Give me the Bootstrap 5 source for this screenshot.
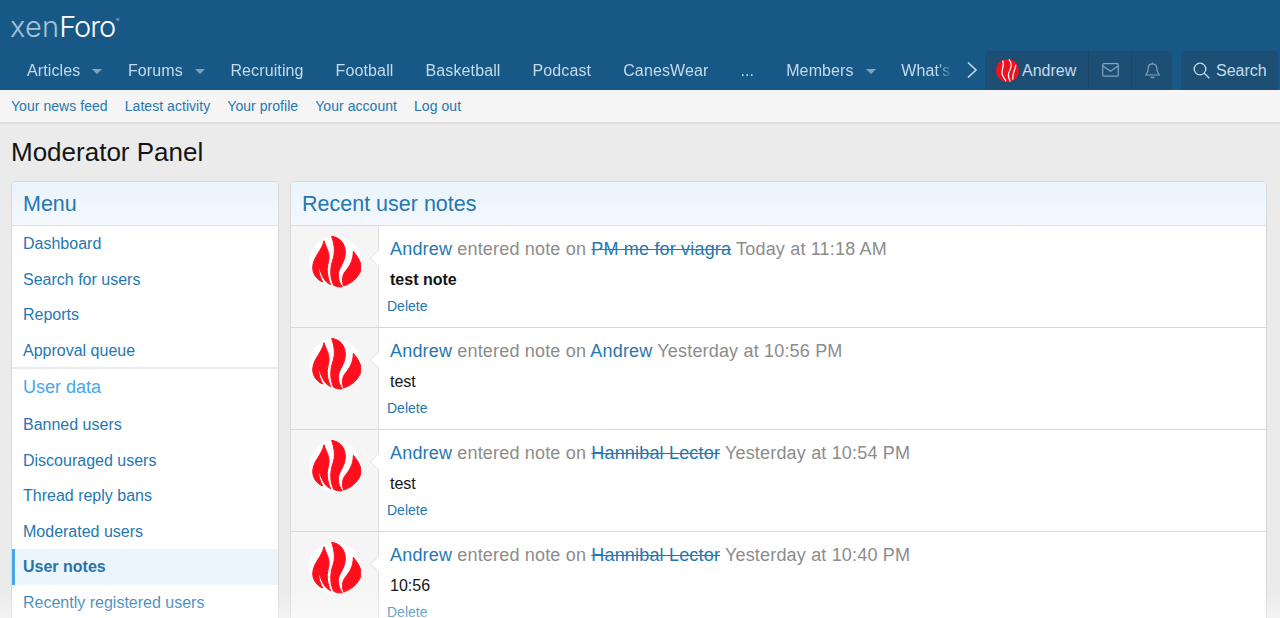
<!DOCTYPE html>
<html lang="en">
<head>
<meta charset="utf-8">
<title>Moderator Panel</title>
<link href="https://cdn.jsdelivr.net/npm/bootstrap@5.3.0/dist/css/bootstrap.min.css" rel="stylesheet">
<style>
html,body{height:618px;overflow:hidden}
body{background:#ebebeb;font-family:"Liberation Sans",Arial,sans-serif;font-size:16px;color:#141414;position:relative}
a{color:#2577b1;text-decoration:none}
.xf-head{background:#185886;height:90px}
.xf-logo{height:50px;padding:0 10px;font-family:"Inter","Liberation Sans",sans-serif;font-size:29px;font-weight:300;letter-spacing:-1.1px;line-height:53px;color:#fff}
.xf-logo span{color:#a5c3d9;letter-spacing:.2px}
.xf-logo sup{font-size:5px;top:-15px;color:#c5d8e6;margin-left:1px}
.xf-navbar{height:40px;padding-left:11px}
.xf-scroll{width:944px;overflow:hidden;white-space:nowrap;-webkit-mask-image:linear-gradient(to right,#000 925px,transparent 942px);mask-image:linear-gradient(to right,#000 925px,transparent 942px)}
.xf-tab{color:#c5dbec;height:40px;line-height:42px;padding:0 16px;flex:none;letter-spacing:.12px}
.xf-caret{display:inline-block;width:0;height:0;border-left:5px solid transparent;border-right:5px solid transparent;border-top:5px solid #7fa5c2;margin-left:12px;vertical-align:2px}
.xf-tab.has-caret{padding-right:9.5px}
.xf-chev{width:30px;flex:none;padding-left:4px}
.xf-group{background:#1d4f75;border-radius:4px 4px 0 0;height:39.5px;margin-top:.5px;color:#c5dbec}
.xf-user{width:103px;padding:1px 0 0 11px;gap:3px}
.xf-ico{width:43px;border-left:1px solid #1a486b}
.xf-ico2{width:41px;border-left:1px solid #1a486b}
.xf-search{margin-left:9px;width:97px;padding:1px 0 0 12px;gap:6px}
.xf-sub{height:34px;background:#f5f5f5;border-bottom:2px solid #dfdfdf;font-size:14px;padding:0 11px;gap:17px;line-height:33px;letter-spacing:.05px}
.xf-title{font-size:26px;font-weight:400;margin:0;padding:13px 11px 0;height:57px;line-height:30px;color:#141414}
.xf-wrap{padding:0 13px 0 11px;gap:11px}
.xf-side{width:268px;flex:none}
.xf-block{background:#fff;border:1px solid #d8d8d8;border-radius:4px 4px 0 0;overflow:hidden}
.xf-hd{font-size:21.5px;height:44px;line-height:44px;padding:0 11px;color:#2577b1;background:linear-gradient(#eaf4fc,#f3f8fd);border-bottom:1px solid #dfdfdf}
.xf-link{display:block;height:35.5px;line-height:35px;padding:0 11px;color:#2577b1}
.xf-link.is-on{background:#ebf5fd;font-weight:700;border-left:3px solid #47a7eb;padding-left:8px;color:#2a72a8}
.xf-cat{font-size:18px;color:#47a7eb;border-top:2px solid #ebebeb;height:40px;margin-top:-1px;line-height:36px;padding:0 11px}
.xf-note{height:102px;border-bottom:1px solid #d8d8d8}
.xf-cell{width:88px;flex:none;background:#f5f5f5;border-right:1px solid #dfdfdf;padding:10px 0 0 18px;position:relative}
.xf-cell::before,.xf-cell::after{content:"";position:absolute;top:24px;width:0;height:0;border-top:8px solid transparent;border-bottom:8px solid transparent}
.xf-cell::before{right:0;border-right:8px solid #dfdfdf}
.xf-cell::after{right:-1px;border-right:8px solid #fff}
.xf-body{padding:11px 0 0 8px}
.xf-line{font-size:18px;line-height:25px;color:#8c8c8c;padding-left:3px;letter-spacing:.18px}
.xf-text{line-height:24px;margin-top:6px;padding-left:3px;height:24px}
.xf-del{font-size:14px;line-height:16px;margin-top:6px}
.xf-shade{position:absolute;left:0;right:0;bottom:0;height:30px;background:linear-gradient(rgba(255,255,255,0),rgba(255,255,255,.4));pointer-events:none}
</style>
</head>
<body>
<svg width="0" height="0" class="position-absolute">
<defs>
<symbol id="flame" viewBox="27 34 156 156">
<circle cx="105" cy="112" r="78" fill="#fff"/>
<g fill="#ff0f1e" stroke="#ff0f1e" stroke-width="3" stroke-linejoin="round">
<path d="M95 35C120 38 137 58 136 85C135 115 115 130 115 150C115 165 120 178 127 186C117 188 108 186 101 182C93 165 90 145 94 122C98 100 112 85 95 35Z"/>
<path d="M72 48C78 68 88 80 87 100C86 115 80 125 82 145C84 160 88 172 92 180C82 176 74 168 68 155C63 145 58 132 55 122C55 140 60 158 68 172C50 165 38 148 38 128C40 95 65 80 72 48Z"/>
<path d="M160 80C172 95 183 110 183 128C183 150 160 175 131 184C125 170 126 152 136 140C148 125 160 108 160 80Z"/>
</g>
</symbol>
</defs>
</svg>

<header class="xf-head">
  <div class="xf-logo"><span>xen</span>Foro<sup>®</sup></div>
  <div class="xf-navbar d-flex">
    <nav class="xf-scroll d-flex">
      <a class="xf-tab has-caret" href="#">Articles<i class="xf-caret"></i></a>
      <a class="xf-tab has-caret" href="#">Forums<i class="xf-caret"></i></a>
      <a class="xf-tab" href="#">Recruiting</a>
      <a class="xf-tab" href="#">Football</a>
      <a class="xf-tab" href="#">Basketball</a>
      <a class="xf-tab" href="#">Podcast</a>
      <a class="xf-tab" href="#">CanesWear</a>
      <a class="xf-tab" href="#">...</a>
      <a class="xf-tab has-caret" href="#">Members<i class="xf-caret"></i></a>
      <a class="xf-tab" href="#">What's</a>
    </nav>
    <div class="xf-chev d-flex align-items-center justify-content-center">
      <svg width="12" height="18" viewBox="0 0 12 18" fill="none" stroke="#c5dbec" stroke-width="1.6"><path d="M2 1.500 10 9 2 16.500"/></svg>
    </div>
    <div class="xf-group d-flex align-items-stretch">
      <a class="xf-user d-flex align-items-center" href="#" style="color:#c5dbec">
        <svg width="23" height="23" viewBox="0 0 24 24"><circle cx="12" cy="12" r="12" fill="#f0101e"/><path d="M7 1.500C9.500 7 5 11 6.500 16C7.500 19 9 21 10.500 23M13.500 .5C18 6 15 10 13.500 14C12.500 17 13 20 15 23.500M20.500 6C21 11 16.500 14 17.500 21.500" fill="none" stroke="#fff" stroke-width="1.300"/></svg>
        <span>Andrew</span>
      </a>
      <a class="xf-ico d-flex align-items-center justify-content-center" href="#">
        <svg width="17" height="14" viewBox="0 0 17 14" fill="none" stroke="#7fa5c2" stroke-width="1.2"><rect x=".7" y=".7" width="15.6" height="12.4" rx="1.2"/><path d="M1 3 8.500 8.200 16 3"/></svg>
      </a>
      <a class="xf-ico2 d-flex align-items-center justify-content-center" href="#">
        <svg width="15" height="17" viewBox="0 0 15 17" fill="none" stroke="#7fa5c2" stroke-width="1.2"><path d="M7.500 1.800C4.500 1.800 3.200 4 3.200 6.500C3.200 10 2 11.500 .8 13H14.200C13 11.500 11.800 10 11.800 6.500C11.800 4 10.500 1.800 7.500 1.800ZM7.500 .5V1.800M5.800 14.800C6.200 16 8.800 16 9.200 14.800"/></svg>
      </a>
    </div>
    <a class="xf-group xf-search d-flex align-items-center" href="#" style="color:#c5dbec">
      <svg width="17" height="17" viewBox="0 0 17 17" fill="none" stroke="#c5dbec" stroke-width="1.3"><circle cx="7" cy="7" r="5.800"/><path d="M11.300 11.300 16.300 16.300"/></svg>
      <span>Search</span>
    </a>
  </div>
</header>

<div class="xf-sub d-flex">
  <a href="#">Your news feed</a><a href="#">Latest activity</a><a href="#">Your profile</a><a href="#">Your account</a><a href="#">Log out</a>
</div>

<h1 class="xf-title">Moderator Panel</h1>

<div class="xf-wrap d-flex align-items-start">
  <aside class="xf-side xf-block">
    <div class="xf-hd">Menu</div>
    <a class="xf-link" href="#">Dashboard</a>
    <a class="xf-link" href="#">Search for users</a>
    <a class="xf-link" href="#">Reports</a>
    <a class="xf-link" href="#">Approval queue</a>
    <div class="xf-cat">User data</div>
    <a class="xf-link" href="#">Banned users</a>
    <a class="xf-link" href="#">Discouraged users</a>
    <a class="xf-link" href="#">Thread reply bans</a>
    <a class="xf-link" href="#">Moderated users</a>
    <a class="xf-link is-on" href="#">User notes</a>
    <a class="xf-link" href="#">Recently registered users</a>
  </aside>
  <main class="xf-block flex-grow-1">
    <div class="xf-hd">Recent user notes</div>
    <div class="xf-note d-flex">
      <div class="xf-cell"><svg width="52" height="52"><use href="#flame"/></svg></div>
      <div class="xf-body">
        <div class="xf-line"><a href="#">Andrew</a> entered note on <a href="#" class="text-decoration-line-through">PM me for viagra</a> Today at 11:18 AM</div>
        <div class="xf-text fw-bold">test note</div>
        <div class="xf-del"><a href="#">Delete</a></div>
      </div>
    </div>
    <div class="xf-note d-flex">
      <div class="xf-cell"><svg width="52" height="52"><use href="#flame"/></svg></div>
      <div class="xf-body">
        <div class="xf-line"><a href="#">Andrew</a> entered note on <a href="#">Andrew</a> Yesterday at 10:56 PM</div>
        <div class="xf-text">test</div>
        <div class="xf-del"><a href="#">Delete</a></div>
      </div>
    </div>
    <div class="xf-note d-flex">
      <div class="xf-cell"><svg width="52" height="52"><use href="#flame"/></svg></div>
      <div class="xf-body">
        <div class="xf-line"><a href="#">Andrew</a> entered note on <a href="#" class="text-decoration-line-through">Hannibal Lector</a> Yesterday at 10:54 PM</div>
        <div class="xf-text">test</div>
        <div class="xf-del"><a href="#">Delete</a></div>
      </div>
    </div>
    <div class="xf-note d-flex">
      <div class="xf-cell"><svg width="52" height="52"><use href="#flame"/></svg></div>
      <div class="xf-body">
        <div class="xf-line"><a href="#">Andrew</a> entered note on <a href="#" class="text-decoration-line-through">Hannibal Lector</a> Yesterday at 10:40 PM</div>
        <div class="xf-text">10:56</div>
        <div class="xf-del"><a href="#">Delete</a></div>
      </div>
    </div>
  </main>
</div>
<div class="xf-shade"></div>
<script src="https://cdn.jsdelivr.net/npm/bootstrap@5.3.0/dist/js/bootstrap.bundle.min.js"></script>
</body>
</html>
